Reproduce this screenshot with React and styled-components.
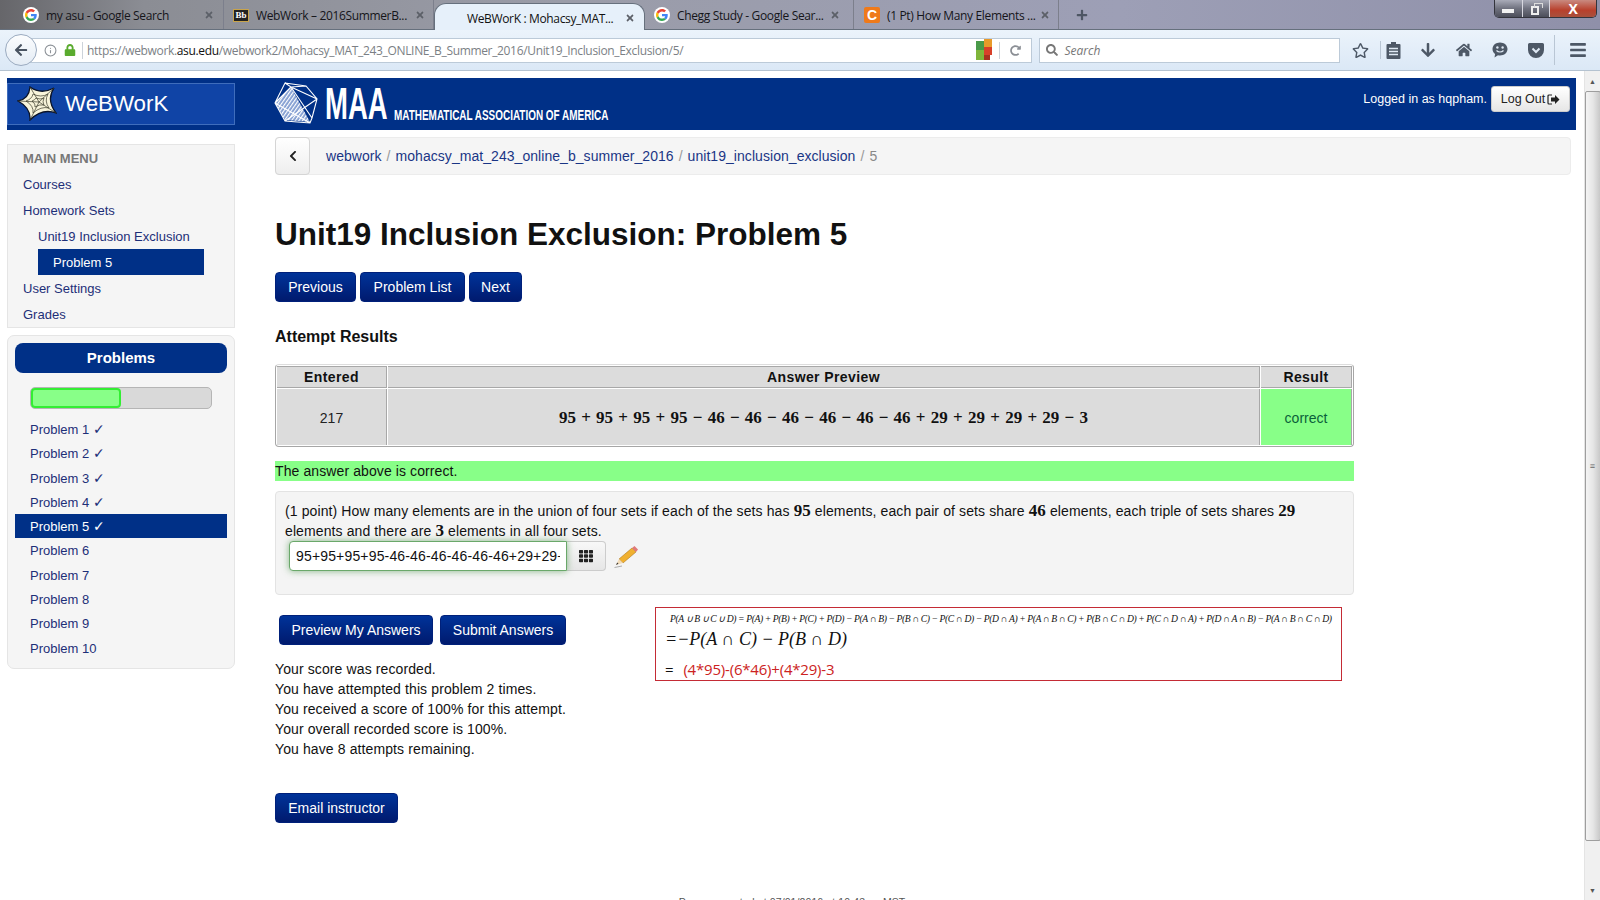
import styled, { createGlobalStyle } from "styled-components";
import {
  FaArrowLeft,
  FaArrowDown,
  FaBars,
  FaChevronLeft,
  FaHome,
  FaLock,
  FaRegStar,
  FaSearch,
  FaTh,
  FaTimes,
  FaPlus,
  FaRedoAlt,
} from "react-icons/fa";
import { FiInfo } from "react-icons/fi";

const GlobalStyle = createGlobalStyle`
  html, body {
    margin: 0;
    padding: 0;
    height: 900px;
    overflow: hidden;
    background: #fff;
    font-family: "Liberation Sans", Arial, sans-serif;
  }
  * { box-sizing: border-box; }
`;

const Screen = styled.div`
  width: 1600px;
  height: 900px;
  display: flex;
  flex-direction: column;
  overflow: hidden;
`;

//-------------browser chrome--------------
const TabStrip = styled.div`
  height: 30px;
  display: flex;
  align-items: stretch;
  padding-left: 10px;
  border-bottom: 1px solid #66707d;
  background: linear-gradient(90deg, #66666a 0, #8b8d94 9%, #9a9ca8 35%, #9d9fb6 70%, #8f90a9 100%);
  font-family: "Open Sans", "Noto Sans", sans-serif;
  font-size: 12px;
  letter-spacing: -0.35px;
  color: #15151a;
`;

const Tab = styled.div`
  width: ${(p) => p.$width}px;
  display: flex;
  align-items: center;
  gap: 7px;
  padding: 1px ${(p) => p.$right || 9}px 0 ${(p) => p.$left || 13}px;
  white-space: nowrap;
  border-right: ${(p) => (p.$plain ? "none" : "1px solid #7c7f8c")};
`;

const ActiveTab = styled(Tab)`
  margin-top: 3px;
  height: 28px;
  border: 1px solid #66707d;
  border-bottom: none;
  border-radius: 12px 12px 0 0;
  background: #e6f0fa;
  color: #111;
`;

const TabTitle = styled.span`
  flex: 1;
  min-width: 0;
`;

const TabClose = styled(FaTimes)`
  font-size: 10px;
  color: #5c6068;
  flex: none;
`;

const NewTab = styled.div`
  width: 46px;
  display: flex;
  align-items: center;
  justify-content: center;
  color: #4e5664;
  font-size: 12px;
`;

const WindowControls = styled.div`
  margin-left: auto;
  margin-right: 3px;
  width: 103px;
  height: 18px;
  display: flex;
  border: 1px solid #33343c;
  border-top: none;
  border-radius: 0 0 5px 5px;
  overflow: hidden;
`;

const WindowButton = styled.div`
  flex: ${(p) => p.$flex};
  display: flex;
  align-items: center;
  justify-content: center;
  color: #fff;
  font-size: 14px;
  font-weight: bold;
  border-right: 1px solid #d8d8e0;
  background: ${(p) =>
    p.$close
      ? "linear-gradient(180deg, #c98a80, #b8402c 60%, #a8503c)"
      : "linear-gradient(180deg, #a9abb8, #70727f 50%, #4c4e5a)"};
  &:last-child { border-right: none; }
`;

const MinimizeBar = styled.span`
  width: 12px;
  height: 4px;
  margin-top: 5px;
  background: #f2f2f2;
`;

const RestoreBox = styled.span`
  width: 8px;
  height: 9px;
  margin: 3px 2px 0 0;
  border: 2px solid #eee;
  position: relative;
  &::before {
    content: "";
    position: absolute;
    left: 1px;
    top: -5px;
    width: 7px;
    height: 4px;
    border: 1px solid #ddd;
    border-bottom: none;
  }
`;

const NavBar = styled.div`
  height: 41px;
  display: flex;
  align-items: center;
  padding-left: 22px;
  border-bottom: 1px solid #b4c2d0;
  background: linear-gradient(180deg, #ebf3fb, #dbe8f6);
  position: relative;
  color: #4d5866;
`;

const BackCircle = styled.div`
  position: absolute;
  left: 5px;
  top: 4px;
  width: 32px;
  height: 32px;
  border-radius: 50%;
  border: 1px solid #9babc0;
  background: linear-gradient(180deg, #fcfdfe, #e4ecf5);
  display: flex;
  align-items: center;
  justify-content: center;
  font-size: 14px;
  color: #4a5462;
`;

const UrlBar = styled.div`
  width: 1012px;
  height: 25px;
  display: flex;
  align-items: center;
  padding-left: 21px;
  background: #fff;
  border: 1px solid #bccad8;
  font-family: "Open Sans", "Noto Sans", sans-serif;
  font-size: 12px;
  letter-spacing: -0.34px;
  color: #7b7f85;
`;

const InfoIcon = styled(FiInfo)`
  font-size: 13px;
  color: #8d9298;
`;

const LockIcon = styled(FaLock)`
  font-size: 12px;
  color: #5aab2e;
  margin-left: 7px;
`;

const UrlSeparator = styled.span`
  width: 1px;
  height: 17px;
  background: #ccd3da;
  margin: 0 ${(p) => p.$right || 4}px 0 ${(p) => p.$left || 6}px;
`;

const UrlText = styled.span`
  flex: 1;
  b { font-weight: 400; color: #111; }
`;

const ReloadIcon = styled(FaRedoAlt)`
  font-size: 11px;
  color: #8b8f95;
  margin-right: 10px;
`;

const SearchBox = styled.div`
  width: 301px;
  height: 25px;
  margin-left: 7px;
  display: flex;
  align-items: center;
  gap: 6px;
  padding-left: 6px;
  background: #fff;
  border: 1px solid #bccad8;
  font-family: "Open Sans", "Noto Sans", sans-serif;
  font-style: italic;
  font-size: 12px;
  color: #777;
`;

const ToolIcons = styled.div`
  flex: 1;
  display: flex;
  align-items: center;
  height: 100%;
`;

const ToolIcon = styled.div`
  width: ${(p) => p.$width || 36}px;
  margin-right: ${(p) => p.$after || 0}px;
  display: flex;
  justify-content: center;
  font-size: ${(p) => p.$size || 16}px;
  color: #4d5866;
`;

const ToolSeparator = styled.span`
  width: 1px;
  height: ${(p) => p.$height || 18}px;
  background: #b9c6d4;
`;

//-------------page--------------
const Viewport = styled.div`
  flex: 1;
  min-height: 0;
  display: flex;
`;

const Page = styled.div`
  width: 1584px;
  padding: 7px 8px 0 7px;
  overflow: hidden;
  color: #111;
  font-size: 14px;
`;

const Banner = styled.header`
  height: 52px;
  width: 1569px;
  display: flex;
  align-items: center;
  background: #003087;
  color: #fff;
`;

const BrandBox = styled.div`
  width: 228px;
  height: 42px;
  margin-top: -1px;
  display: flex;
  align-items: center;
  gap: 8px;
  padding-left: 9px;
  background: #1044a6;
  border: 1px solid #3f6dbc;
  font-size: 22.3px;
`;

const MaaLogo = styled.div`
  margin-left: 39px;
  height: 100%;
  display: flex;
  align-items: center;
`;

const MaaLetters = styled.span`
  width: 62px;
  margin-left: 6px;
  display: inline-block;
  font-size: 44px;
  font-weight: bold;
  line-height: 1;
  transform: scaleX(0.625);
  transform-origin: left center;
`;

const MaaName = styled.span`
  width: 218px;
  margin: 21px 0 0 7px;
  display: inline-block;
  white-space: nowrap;
  font-size: 14px;
  font-weight: bold;
  transform: scaleX(0.71);
  transform-origin: left center;
`;

const UserArea = styled.div`
  margin-left: auto;
  margin-right: 6px;
  margin-top: -10px;
  display: flex;
  align-items: center;
  gap: 4px;
  font-size: 12.5px;
`;

const LogoutButton = styled.button`
  width: 79px;
  height: 26px;
  padding: 0;
  display: flex;
  align-items: center;
  justify-content: center;
  gap: 2px;
  border: 1px solid #ccc;
  border-radius: 3px;
  background: linear-gradient(180deg, #fff, #e6e6e6);
  font: 12.5px "Liberation Sans", Arial, sans-serif;
  color: #222;
`;

const Columns = styled.div`
  display: flex;
  gap: 40px;
`;

const Sidebar = styled.aside`
  width: 228px;
  padding-top: 14px;
  display: flex;
  flex-direction: column;
  gap: 7px;
`;

const MainMenu = styled.nav`
  height: 184px;
  padding-left: 15px;
  background: #f5f5f5;
  border: 1px solid #e5e5e5;
`;

const MenuHeading = styled.div`
  height: 26px;
  line-height: 27px;
  font-size: 13px;
  font-weight: bold;
  color: #777;
`;

const MenuItem = styled.div`
  height: 26px;
  line-height: 28px;
  font-size: 13px;
  color: #1d2f78;
  margin-left: ${(p) => (p.$active ? 15 : p.$depth ? 15 : 0)}px;
  padding-left: ${(p) => (p.$active ? 15 : 0)}px;
  width: ${(p) => (p.$active ? "166px" : "auto")};
  ${(p) => p.$active && "background: #003087; color: #fff;"}
`;

const ProblemsPanel = styled.div`
  height: 334px;
  padding: 7px 7px 0;
  background: #f5f5f5;
  border: 1px solid #e5e5e5;
  border-radius: 7px;
`;

const ProblemsHeading = styled.div`
  height: 30px;
  line-height: 29px;
  text-align: center;
  border-radius: 8px;
  background: #003087;
  color: #fff;
  font-size: 15px;
  font-weight: bold;
`;

const Progress = styled.div`
  margin: 14px 15px 8px;
  height: 22px;
  background: #d9d9d9;
  border: 1px solid #b5b5b5;
  border-radius: 5px;
`;

const ProgressFill = styled.div`
  height: 100%;
  background: #88ff88;
  border: 2px solid #33ee33;
  border-radius: 4px;
`;

const ProblemRow = styled.div`
  height: 24.3px;
  line-height: 25px;
  padding-left: 15px;
  font-size: 13px;
  color: ${(p) => (p.$active ? "#fff" : "#1d2f78")};
  background: ${(p) => (p.$active ? "#003087" : "transparent")};
`;

const Content = styled.main`
  flex: 1;
  padding-top: 7px;
`;

const Breadcrumb = styled.div`
  width: 1296px;
  height: 38px;
  display: flex;
  align-items: center;
  background: #f5f5f5;
  border: 1px solid #ececec;
  border-radius: 4px;
  font-size: 14px;
  letter-spacing: 0.05px;
  color: #888;
`;

const BackButton = styled.div`
  width: 35px;
  height: 38px;
  margin: -1px 16px 0 -1px;
  display: flex;
  align-items: center;
  justify-content: center;
  background: linear-gradient(180deg, #fff, #eee);
  border: 1px solid #d5d5d5;
  border-radius: 4px;
  color: #222;
  font-size: 12px;
`;

const Crumb = styled.a`
  color: #1a3585;
`;

const CrumbDivider = styled.span`
  margin: 0 5px;
  color: #999;
`;

const Title = styled.h1`
  margin: 39px 0 18px;
  height: 40px;
  line-height: 40px;
  font-size: 31.5px;
  font-weight: bold;
  color: #111;
`;

const ButtonRow = styled.div`
  display: flex;
  gap: ${(p) => p.$gap || 4}px;
  padding-left: ${(p) => p.$indent || 0}px;
`;

const NavyButton = styled.button`
  height: 30px;
  width: ${(p) => p.$width}px;
  padding: 0;
  border: 1px solid #00207a;
  border-radius: 4px;
  background: linear-gradient(180deg, #003399, #001a6e);
  color: #fff;
  font: 14px "Liberation Sans", Arial, sans-serif;
`;

const SectionTitle = styled.h3`
  margin: 25px 0 17px;
  height: 20px;
  line-height: 20px;
  font-size: 16px;
  font-weight: bold;
`;

const ResultTable = styled.table`
  width: 1079px;
  height: 83px;
  table-layout: fixed;
  border-collapse: separate;
  border-spacing: 1px;
  background: #fff;
  border: 1px solid #a6a6a6;
  border-top-color: #ddd;
  border-radius: 4px;
`;

const HeadCell = styled.th`
  height: 22px;
  padding: 0;
  background: #dcdcdc;
  border: 1px solid #a8a8a8;
  border-left: none;
  font-size: 14px;
  letter-spacing: 0.4px;
  color: #111;
`;

const BodyCell = styled.td`
  padding: 2px 0 0;
  text-align: center;
  background: ${(p) => (p.$good ? "#88ff88" : "#dcdcdc")};
  color: ${(p) => (p.$good ? "#0b5f3a" : "#222")};
  border-right: 1px solid #a8a8a8;
  font-size: 14px;
`;

const MathBold = styled.span`
  font-family: "Liberation Serif", "DejaVu Serif", serif;
  font-weight: bold;
  font-size: ${(p) => p.$size || 17}px;
  color: #111;
  word-spacing: 1px;
`;

const Feedback = styled.div`
  margin-top: 14px;
  width: 1079px;
  height: 20px;
  line-height: 20px;
  background: #88ff88;
  font-size: 14px;
  letter-spacing: 0.1px;
`;

const ProblemBox = styled.div`
  margin-top: 10px;
  width: 1079px;
  height: 104px;
  padding: 9px 9px;
  background: #f4f4f4;
  border: 1px solid #e3e3e3;
  border-radius: 4px;
  font-size: 14px;
  line-height: 20px;
  letter-spacing: 0.11px;
`;

const AnswerRow = styled.div`
  display: flex;
  align-items: center;
  margin: 0 0 0 4px;
`;

const AnswerInput = styled.div`
  width: 278px;
  height: 30px;
  padding: 0 6px;
  line-height: 28px;
  background: #fff;
  border: 1px solid #6aa86a;
  border-radius: 4px 0 0 4px;
  box-shadow: 0 0 7px rgba(60, 140, 60, 0.6);
  position: relative;
`;

const AnswerValue = styled.div`
  overflow: hidden;
  white-space: nowrap;
  letter-spacing: 0.16px;
`;

const AddOn = styled.div`
  width: 39px;
  height: 30px;
  display: flex;
  align-items: center;
  justify-content: center;
  background: linear-gradient(180deg, #f8f8f8, #e6e6e6);
  border: 1px solid #ccc;
  border-left: none;
  border-radius: 0 4px 4px 0;
  font-size: 14px;
  color: #222;
`;

const PencilSlot = styled.div`
  margin-left: 8px;
  display: flex;
`;

const SubmitArea = styled.div`
  margin-top: 12px;
  display: flex;
`;

const LeftColumn = styled.div`
  width: 380px;
  padding-top: 8px;
`;

const ScoreSummary = styled.div`
  margin-top: 14px;
  font-size: 14px;
  line-height: 20px;
  letter-spacing: 0.11px;
`;

const EmailRow = styled.div`
  margin-top: 34px;
`;

const NoteBox = styled.div`
  width: 687px;
  height: 74px;
  padding: 3px 0 0 9px;
  border: 1px solid #c42b35;
  color: #111;
`;

const NoteFormula = styled.div`
  font-family: "Liberation Serif", serif;
  font-style: italic;
  font-size: 9.6px;
  line-height: 16px;
  padding-left: 5px;
  letter-spacing: -0.4px;
  white-space: nowrap;
`;

const NoteLine = styled.div`
  font-family: "Liberation Serif", serif;
  font-style: italic;
  font-size: 18px;
  line-height: 24px;
`;

const NoteSum = styled.div`
  margin-top: 9px;
  font-family: "Open Sans", sans-serif;
  font-size: 15px;
  line-height: 18px;
  letter-spacing: -0.2px;
  color: #111;
  span { color: #cc2222; margin-left: 10px; }
`;

const PageFooter = styled.div`
  margin-top: 71px;
  width: 1034px;
  text-align: center;
  font-size: 10.5px;
  line-height: 16px;
  letter-spacing: 0.1px;
  color: #555;
`;

//-------------scrollbar--------------
const ScrollBar = styled.div`
  width: 16px;
  display: flex;
  flex-direction: column;
  align-items: center;
  background: #f0f0f0;
  border-left: 1px solid #e4e4e4;
`;

const ScrollArrow = styled.div`
  height: 20px;
  display: flex;
  align-items: center;
  justify-content: center;
  color: #555;
  font-size: 7px;
`;

const ScrollThumb = styled.div`
  width: 16px;
  height: 750px;
  display: flex;
  align-items: center;
  justify-content: center;
  background: linear-gradient(90deg, #f4f4f4, #e6e6e6 50%, #c8c8c8);
  border: 1px solid #9e9e9e;
  border-radius: 2px;
  color: #666;
  font-size: 9px;
  line-height: 4px;
`;

const ScrollRest = styled.div`
  flex: 1;
`;

//-------------icons--------------
function GoogleIcon() {
  return (
    <svg width="16" height="16" viewBox="0 0 48 48" style={{ flex: "none" }}>
      <circle cx="24" cy="24" r="24" fill="#fff" />
      <g transform="translate(6 6) scale(0.75)">
        <path fill="#EA4335" d="M24 9.5c3.54 0 6.71 1.22 9.21 3.6l6.85-6.85C35.9 2.38 30.47 0 24 0 14.62 0 6.51 5.38 2.56 13.22l7.98 6.19C12.43 13.72 17.74 9.5 24 9.5z" />
        <path fill="#4285F4" d="M46.98 24.55c0-1.57-.15-3.09-.38-4.55H24v9.02h12.94c-.58 2.96-2.26 5.48-4.78 7.18l7.73 6c4.51-4.18 7.09-10.36 7.09-17.65z" />
        <path fill="#FBBC05" d="M10.53 28.59c-.48-1.45-.76-2.99-.76-4.59s.27-3.14.76-4.59l-7.98-6.19C.92 16.46 0 20.12 0 24c0 3.88.92 7.54 2.56 10.78l7.97-6.19z" />
        <path fill="#34A853" d="M24 48c6.48 0 11.93-2.13 15.89-5.81l-7.73-6c-2.15 1.45-4.92 2.3-8.16 2.3-6.26 0-11.57-4.22-13.47-9.91l-7.98 6.19C6.51 42.62 14.62 48 24 48z" />
      </g>
    </svg>
  );
}

const BbIcon = styled.span`
  width: 16px;
  height: 13px;
  flex: none;
  display: flex;
  align-items: center;
  justify-content: center;
  background: #222;
  border: 1px solid #c9a44a;
  color: #fff;
  font: bold 9px "Liberation Serif", serif;
  letter-spacing: 0;
`;

const CheggIcon = styled.span`
  width: 16px;
  height: 16px;
  flex: none;
  display: flex;
  align-items: center;
  justify-content: center;
  background: #ef7a1a;
  border-radius: 2px;
  color: #fff;
  font: bold 14px "Liberation Sans", sans-serif;
`;

function AvgIcon() {
  return (
    <svg width="16" height="22" viewBox="0 0 16 22" style={{ flex: "none", marginRight: 6 }}>
      <rect x="0" y="2" width="8" height="9" fill="#4a9a4a" />
      <rect x="8" y="0" width="8" height="8" fill="#e89a2a" />
      <rect x="0" y="11" width="8" height="10" fill="#7fb53a" />
      <rect x="8" y="8" width="8" height="8" fill="#d8402a" />
      <rect x="8" y="16" width="6" height="5" fill="#a8301f" />
    </svg>
  );
}

function ClipboardIcon() {
  return (
    <svg width="15" height="17" viewBox="0 0 15 17">
      <path fill="#4d5866" d="M5 0h5v2h3.5a1 1 0 0 1 1 1v13a1 1 0 0 1-1 1h-12a1 1 0 0 1-1-1V3a1 1 0 0 1 1-1H5z" />
      <path stroke="#dfe9f4" strokeWidth="1.4" d="M3 6.5h9M3 9.5h9M3 12.5h9" />
    </svg>
  );
}

function ChatIcon() {
  return (
    <svg width="16" height="16" viewBox="0 0 16 16">
      <path fill="#4d5866" d="M8 0.5c4.2 0 7.5 2.8 7.5 6.5S12.2 13.5 8 13.5c-.7 0-1.4-.1-2-.2L2.5 15.5l.6-3.5C1.400 10.800.5 9 .5 7 .5 3.300 3.800.5 8 .5z" />
      <circle cx="5.400" cy="5.500" r="1.200" fill="#dfe9f4" />
      <circle cx="10.600" cy="5.500" r="1.200" fill="#dfe9f4" />
      <path fill="none" stroke="#dfe9f4" strokeWidth="1.200" d="M4.500 8.500c1.800 2 5.200 2 7 0" />
    </svg>
  );
}

function PocketIcon() {
  return (
    <svg width="16" height="15" viewBox="0 0 16 15">
      <path fill="#4d5866" d="M1.500 0h13A1.500 1.500 0 0 1 16 1.500V7A8 8 0 0 1 0 7V1.500A1.500 1.500 0 0 1 1.500 0z" />
      <path fill="none" stroke="#dfe9f4" strokeWidth="2" d="M4.500 5.500 8 9l3.500-3.500" />
    </svg>
  );
}

function WebworkStar() {
  return (
    <svg width="40" height="35" viewBox="0 0 40 35" style={{ flex: "none" }}>
      <path
        fill="#f8f4da"
        stroke="#0c1428"
        strokeWidth="1.300"
        d="M13 1 Q24 9 37 2 Q29 14 39 27 Q25 22 13 34 Q14 22 1 15 Q12 13 13 1 Z"
      />
      <path
        fill="none"
        stroke="#3a3a2a"
        strokeWidth="0.700"
        d="M13 1 L22 16 L37 2 M22 16 L39 27 M22 16 L13 34 M22 16 L1 15 M16 8 Q24 12 31 8 Q27 15 32 22 Q24 20 16 27 Q17 20 9 15 Q15 13 16 8 Z M19 12 Q23 14 27 12 Q25 16 27 19 Q23 18 18 21 Q19 18 15 15 Q18 14 19 12 Z"
      />
    </svg>
  );
}

function MaaPolyhedron() {
  return (
    <svg width="45" height="44" viewBox="0 0 45 44" style={{ flex: "none" }}>
      <defs>
        <pattern id="maaStripes" width="3" height="3" patternUnits="userSpaceOnUse" patternTransform="rotate(35)">
          <rect width="3" height="3" fill="#7f9bd0" />
          <rect width="1.200" height="3" fill="#fff" />
        </pattern>
      </defs>
      <path fill="url(#maaStripes)" d="M1 21 L17 5 L36 40 L11 38 Z" />
      <path
        fill="none"
        stroke="#fff"
        strokeWidth="1.100"
        d="M11 1 L32 4 L43 17 L38 36 L36 41 L11 39 L1 21 Z M11 1 L17 5 L32 4 M17 5 L43 17 M17 5 L1 21 M17 5 L38 36 M43 17 L11 39 M1 21 L36 41"
      />
    </svg>
  );
}

function LogoutIcon() {
  return (
    <svg width="13" height="11" viewBox="0 0 13 11">
      <path fill="none" stroke="#222" strokeWidth="1.200" d="M5 1H2a1 1 0 0 0-1 1v7a1 1 0 0 0 1 1h3" />
      <path fill="#222" d="M4 3.500h4V1l4.500 4.500L8 10V7.500H4z" />
    </svg>
  );
}

function PencilIcon() {
  return (
    <svg width="25" height="23" viewBox="0 0 25 23">
      <path fill="#f0b030" stroke="#a06a10" strokeWidth="0.500" d="M5 14 L18 3 L22 7 L9 18 Z" />
      <path fill="#e07a7a" d="M18 3 L20.500 1 L24 4.500 L22 7 Z" />
      <path fill="#f3dcb8" d="M5 14 L9 18 L2 20 Z" />
      <path fill="#333" d="M3.200 17.500 L4.500 18.800 L2 20 Z" />
      <path stroke="#999" strokeWidth="0.800" d="M0.500 22.500 L8 21" />
    </svg>
  );
}

const Check = styled.span`
  font-family: "DejaVu Sans", sans-serif;
  font-size: 14px;
  line-height: 1;
`;

const problems = [1, 2, 3, 4, 5, 6, 7, 8, 9, 10];
const previewSum =
  "95 + 95 + 95 + 95 − 46 − 46 − 46 − 46 − 46 − 46 + 29 + 29 + 29 + 29 − 3";

export default function App() {
  return (
    <>
      <GlobalStyle />
      <Screen>
        <TabStrip>
          <Tab $width={214}>
            <GoogleIcon />
            <TabTitle>my asu - Google Search</TabTitle>
            <TabClose />
          </Tab>
          <Tab $width={210} $left={9} $right={8}>
            <BbIcon>Bb</BbIcon>
            <TabTitle>WebWork – 2016SummerB...</TabTitle>
            <TabClose />
          </Tab>
          <ActiveTab $width={211} $left={32} $plain>
            <TabTitle>WeBWorK : Mohacsy_MAT...</TabTitle>
            <TabClose />
          </ActiveTab>
          <Tab $width={209} $left={9} $right={13}>
            <GoogleIcon />
            <TabTitle>Chegg Study - Google Sear...</TabTitle>
            <TabClose />
          </Tab>
          <Tab $width={205} $left={10} $right={8}>
            <CheggIcon>C</CheggIcon>
            <TabTitle>(1 Pt) How Many Elements ...</TabTitle>
            <TabClose />
          </Tab>
          <NewTab>
            <FaPlus />
          </NewTab>
          <WindowControls>
            <WindowButton $flex={28}>
              <MinimizeBar />
            </WindowButton>
            <WindowButton $flex={27}>
              <RestoreBox />
            </WindowButton>
            <WindowButton $flex={48} $close>
              X
            </WindowButton>
          </WindowControls>
        </TabStrip>

        <NavBar>
          <BackCircle>
            <FaArrowLeft />
          </BackCircle>
          <UrlBar>
            <InfoIcon />
            <LockIcon />
            <UrlSeparator />
            <UrlText>
              https://webwork.<b>asu.edu</b>/webwork2/Mohacsy_MAT_243_ONLINE_B_Summer_2016/Unit19_Inclusion_Exclusion/5/
            </UrlText>
            <AvgIcon />
            <UrlSeparator $left={1} $right={10} />
            <ReloadIcon />
          </UrlBar>
          <SearchBox>
            <FaSearch />
            Search
          </SearchBox>
          <ToolIcons>
            <ToolIcon $width={40} $size={17}>
              <FaRegStar />
            </ToolIcon>
            <ToolSeparator />
            <ToolIcon $width={24} $after={5}>
              <ClipboardIcon />
            </ToolIcon>
            <ToolIcon>
              <FaArrowDown />
            </ToolIcon>
            <ToolIcon>
              <FaHome />
            </ToolIcon>
            <ToolIcon>
              <ChatIcon />
            </ToolIcon>
            <ToolIcon>
              <PocketIcon />
            </ToolIcon>
            <ToolSeparator $height={30} />
            <ToolIcon $width={45} $size={18}>
              <FaBars />
            </ToolIcon>
          </ToolIcons>
        </NavBar>

        <Viewport>
          <Page>
            <Banner>
              <BrandBox>
                <WebworkStar />
                WeBWorK
              </BrandBox>
              <MaaLogo>
                <MaaPolyhedron />
                <MaaLetters>MAA</MaaLetters>
                <MaaName>MATHEMATICAL ASSOCIATION OF AMERICA</MaaName>
              </MaaLogo>
              <UserArea>
                Logged in as hqpham.
                <LogoutButton>
                  Log Out
                  <LogoutIcon />
                </LogoutButton>
              </UserArea>
            </Banner>

            <Columns>
              <Sidebar>
                <MainMenu>
                  <MenuHeading>MAIN MENU</MenuHeading>
                  <MenuItem>Courses</MenuItem>
                  <MenuItem>Homework Sets</MenuItem>
                  <MenuItem $depth>Unit19 Inclusion Exclusion</MenuItem>
                  <MenuItem $active>Problem 5</MenuItem>
                  <MenuItem>User Settings</MenuItem>
                  <MenuItem>Grades</MenuItem>
                </MainMenu>
                <ProblemsPanel>
                  <ProblemsHeading>Problems</ProblemsHeading>
                  <Progress>
                    <ProgressFill style={{ width: "50%" }} />
                  </Progress>
                  {problems.map((n) => (
                    <ProblemRow key={n} $active={n === 5}>
                      Problem {n} {n <= 5 && <Check>✓</Check>}
                    </ProblemRow>
                  ))}
                </ProblemsPanel>
              </Sidebar>

              <Content>
                <Breadcrumb>
                  <BackButton>
                    <FaChevronLeft />
                  </BackButton>
                  <Crumb>webwork</Crumb>
                  <CrumbDivider>/</CrumbDivider>
                  <Crumb>mohacsy_mat_243_online_b_summer_2016</Crumb>
                  <CrumbDivider>/</CrumbDivider>
                  <Crumb>unit19_inclusion_exclusion</Crumb>
                  <CrumbDivider>/</CrumbDivider>5
                </Breadcrumb>

                <Title>Unit19 Inclusion Exclusion: Problem 5</Title>

                <ButtonRow>
                  <NavyButton $width={81}>Previous</NavyButton>
                  <NavyButton $width={105}>Problem List</NavyButton>
                  <NavyButton $width={53}>Next</NavyButton>
                </ButtonRow>

                <SectionTitle>Attempt Results</SectionTitle>

                <ResultTable>
                  <colgroup>
                    <col style={{ width: 110 }} />
                    <col />
                    <col style={{ width: 91 }} />
                  </colgroup>
                  <thead>
                    <tr>
                      <HeadCell>Entered</HeadCell>
                      <HeadCell>Answer Preview</HeadCell>
                      <HeadCell>Result</HeadCell>
                    </tr>
                  </thead>
                  <tbody>
                    <tr>
                      <BodyCell>217</BodyCell>
                      <BodyCell>
                        <MathBold>{previewSum}</MathBold>
                      </BodyCell>
                      <BodyCell $good>correct</BodyCell>
                    </tr>
                  </tbody>
                </ResultTable>

                <Feedback>The answer above is correct.</Feedback>

                <ProblemBox>
                  (1 point) How many elements are in the union of four sets if each of the sets has{" "}
                  <MathBold>95</MathBold> elements, each pair of sets share <MathBold>46</MathBold>{" "}
                  elements, each triple of sets shares <MathBold>29</MathBold> elements and there are{" "}
                  <MathBold>3</MathBold> elements in all four sets.
                  <AnswerRow>
                    <AnswerInput>
                      <AnswerValue>95+95+95+95-46-46-46-46-46-46+29+29+29+29-3</AnswerValue>
                    </AnswerInput>
                    <AddOn>
                      <FaTh />
                    </AddOn>
                    <PencilSlot>
                      <PencilIcon />
                    </PencilSlot>
                  </AnswerRow>
                </ProblemBox>

                <SubmitArea>
                  <LeftColumn>
                    <ButtonRow $gap={7} $indent={4}>
                      <NavyButton $width={154}>Preview My Answers</NavyButton>
                      <NavyButton $width={126}>Submit Answers</NavyButton>
                    </ButtonRow>
                    <ScoreSummary>
                      Your score was recorded.
                      <br />
                      You have attempted this problem 2 times.
                      <br />
                      You received a score of 100% for this attempt.
                      <br />
                      Your overall recorded score is 100%.
                      <br />
                      You have 8 attempts remaining.
                    </ScoreSummary>
                    <EmailRow>
                      <NavyButton $width={123}>Email instructor</NavyButton>
                    </EmailRow>
                  </LeftColumn>
                  <NoteBox>
                    <NoteFormula>
                      P(A ∪ B ∪ C ∪ D) = P(A) + P(B) + P(C) + P(D) − P(A ∩ B) − P(B ∩ C) − P(C ∩ D) − P(D ∩ A) + P(A ∩ B ∩ C) + P(B ∩ C ∩ D) + P(C ∩ D ∩ A) + P(D ∩ A ∩ B) − P(A ∩ B ∩ C ∩ D)
                    </NoteFormula>
                    <NoteLine>=−P(A ∩ C) − P(B ∩ D)</NoteLine>
                    <NoteSum>
                      =<span>(4*95)-(6*46)+(4*29)-3</span>
                    </NoteSum>
                  </NoteBox>
                </SubmitArea>

                <PageFooter>Page generated at 07/01/2016 at 10:43pm MST</PageFooter>
              </Content>
            </Columns>
          </Page>

          <ScrollBar>
            <ScrollArrow>▲</ScrollArrow>
            <ScrollThumb>≡</ScrollThumb>
            <ScrollRest />
            <ScrollArrow>▼</ScrollArrow>
          </ScrollBar>
        </Viewport>
      </Screen>
    </>
  );
}
